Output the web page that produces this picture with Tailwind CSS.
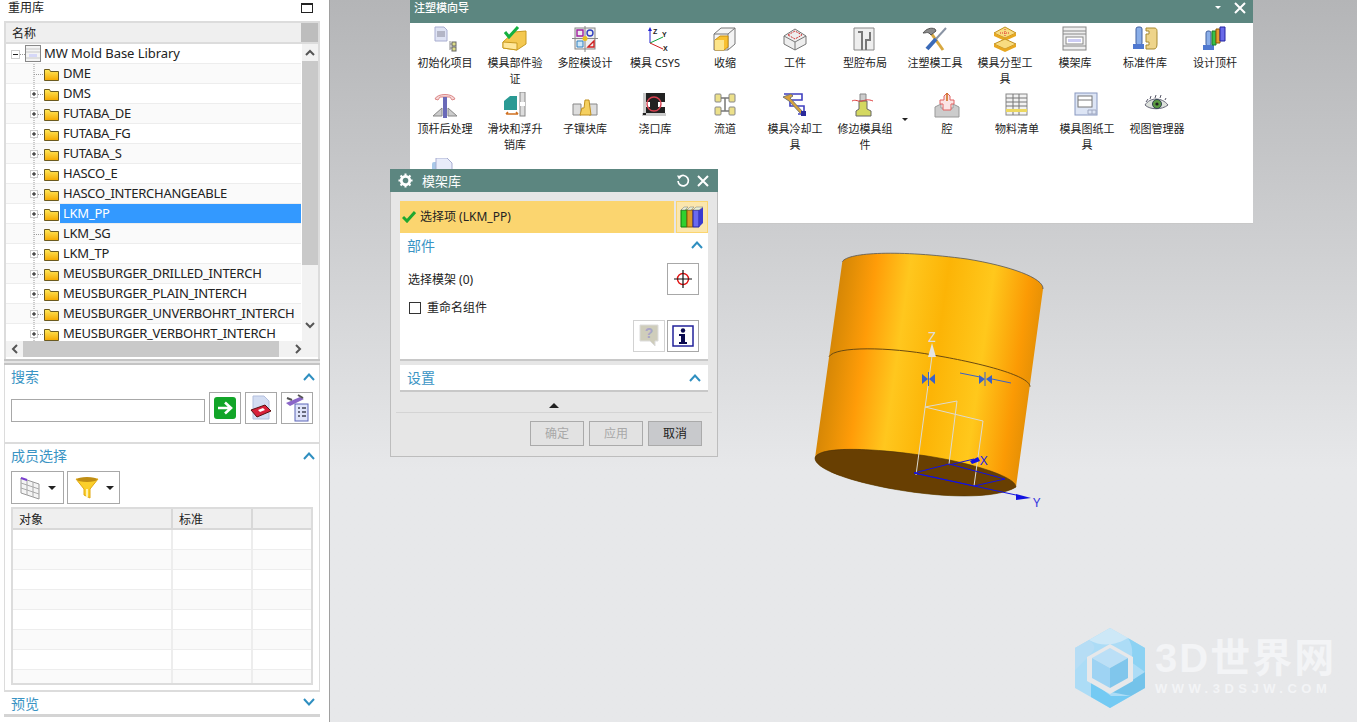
<!DOCTYPE html>
<html lang="zh">
<head>
<meta charset="UTF-8">
<title>注塑模向导</title>
<script src="https://cdn.jsdelivr.net/npm/@tailwindcss/browser@4"></script>
</head>
<body class="m-0">
<div class="relative flex w-[1357px] h-[722px] overflow-hidden text-[12px] text-[#222] font-['Noto_Sans','Noto_Sans_CJK_SC',sans-serif]">

  <!-- left reuse library panel -->
  <div class="w-[330px] h-full shrink-0 bg-white border-r border-r-[#a0a0a0] pr-[9px]">
    <div class="flex items-center justify-between h-[21px] pl-[8px] pr-[7px] pb-[6px]">
      <span class="leading-[15px]">重用库</span>
      <span class="w-[12px] h-[10px] border border-[#222] border-t-2"></span>
    </div>

    <div class="ml-[4px] w-[316px] h-[338px] border-2 border-[#dcdcdc] border-b-0 flex flex-col">
      <div class="flex h-[21px] shrink-0 border-b-2 border-b-[#dcdcdc]">
        <div class="w-[295px] bg-[#efefef] pl-[6px] leading-[21px]">名称</div>
        <div class="flex-1 bg-[#bdbdbd]"></div>
      </div>
      <div class="flex h-[297px] shrink-0">
        <div id="tree" class="w-[295px] h-full overflow-hidden"></div>
        <div class="flex-1 flex flex-col items-center bg-[#f2f2f2] ml-[1px]">
          <svg class="shrink-0 mt-[3px] mb-[3px]" width="10" height="11" viewBox="0 0 10 11"><path d="M1 8l4-4 4 4" fill="none" stroke="#555" stroke-width="2"/></svg>
          <div class="w-full h-[204px] bg-[#c9c9c9] shrink-0"></div>
          <div class="flex-1"></div>
          <svg class="shrink-0 mb-[10px]" width="10" height="11" viewBox="0 0 10 11"><path d="M1 3l4 4 4-4" fill="none" stroke="#555" stroke-width="2"/></svg>
        </div>
      </div>
      <div class="flex items-center h-[16px] shrink-0 bg-[#f2f2f2]">
        <div class="w-[17px] flex justify-center"><svg width="9" height="10" viewBox="0 0 9 10"><path d="M7 1L3 5l4 4" fill="none" stroke="#555" stroke-width="2"/></svg></div>
        <div class="w-[256px] h-full bg-[#c9c9c9]"></div>
        <div class="flex-1 flex justify-center"><svg width="9" height="10" viewBox="0 0 9 10"><path d="M2 1l4 4-4 4" fill="none" stroke="#555" stroke-width="2"/></svg></div>
      </div>
    </div>

    <div class="ml-[4px] w-[316px] h-[6px] bg-[#e4e4e4] border-y-2 border-y-[#c4c4c4]"></div>

    <!-- search -->
    <div class="ml-[4px] w-[316px] h-[79px] border-x border-x-[#dcdcdc] border-b-2 border-b-[#dcdcdc] px-[6px]">
      <div class="flex items-center justify-between h-[27px] pb-[4px]">
        <span class="text-[14px] text-[#3a94c4]">搜索</span>
        <svg class="mr-[-2px]" width="12" height="8" viewBox="0 0 12 8"><path d="M1 7l5-5.500L11 7" fill="none" stroke="#2f8fc0" stroke-width="2"/></svg>
      </div>
      <div class="flex gap-[4px]">
        <div class="w-[194px] h-[23px] mt-[7px] border border-[#a8a8a8]"></div>
        <div class="w-[32px] h-[32px] border border-[#a8a8a8] flex items-center justify-center">
          <svg width="22" height="22" viewBox="0 0 22 22"><rect width="22" height="22" rx="3" fill="#12a528"/><path d="M4 11h12M11 5.500l6 5.500-6 5.500" fill="none" stroke="#fff" stroke-width="2.600"/></svg>
        </div>
        <div class="w-[32px] h-[32px] border border-[#a8a8a8] flex items-center justify-center">
          <svg width="24" height="26" viewBox="0 0 24 26"><path d="M4 1h11l5 5v18H4z" fill="#d3ddf2" stroke="#b3bfdd"/><path d="M2 15l14-5 6 6-14 6z" fill="#d8203a" stroke="#5a1010"/><path d="M9 15l5-2 2 2-5 2z" fill="#fff"/></svg>
        </div>
        <div class="w-[32px] h-[32px] border border-[#a8a8a8] flex items-center justify-center">
          <svg width="26" height="28" viewBox="0 0 26 28"><rect x="11" y="10" width="13" height="17" fill="#dfe4fa" stroke="#5c66b8"/><path d="M14 14h2M18 14h4M14 18h2M18 18h4M14 22h2M18 22h4" stroke="#445" stroke-width="1.500"/><path d="M2 9l14-6 4 2-14 7z" fill="#8a66c8"/><path d="M3 4l5 2M14 1l5 3" stroke="#555" stroke-width="2"/></svg>
        </div>
      </div>
    </div>

    <!-- member select -->
    <div class="ml-[4px] w-[316px] h-[248px] border-x border-x-[#dcdcdc] border-b-2 border-b-[#dcdcdc] px-[6px]">
      <div class="flex items-center justify-between h-[27px] pb-[4px]">
        <span class="text-[14px] text-[#3a94c4]">成员选择</span>
        <svg class="mr-[-2px]" width="12" height="8" viewBox="0 0 12 8"><path d="M1 7l5-5.500L11 7" fill="none" stroke="#2f8fc0" stroke-width="2"/></svg>
      </div>
      <div class="flex gap-[3px]">
        <div class="w-[53px] h-[33px] border border-[#a8a8a8] flex items-center pl-[8px] gap-[8px]">
          <svg width="20" height="24" viewBox="0 0 20 24"><path d="M1 2l18 6v15L1 17z" fill="#f4f4f4" stroke="#999"/><path d="M7 4v15M13 6v15M1 7l18 6M1 12l18 6" stroke="#aaa"/><path d="M1 2l6 2" stroke="#7a3fd0" stroke-width="2"/></svg>
          <span class="w-0 h-0 border-x-[4px] border-x-transparent border-t-[4px] border-t-[#222]"></span>
        </div>
        <div class="w-[53px] h-[33px] border border-[#a8a8a8] flex items-center pl-[7px] gap-[7px]">
          <svg width="24" height="24" viewBox="0 0 24 24"><path d="M1 3h22l-8 10v9l-6-3v-6z" fill="#fbcf2a" stroke="#e2a810"/><ellipse cx="12" cy="3.500" rx="10" ry="2.500" fill="#c08e14"/><path d="M12 13v8" stroke="#fff3b0" stroke-width="2"/></svg>
          <span class="w-0 h-0 border-x-[4px] border-x-transparent border-t-[4px] border-t-[#222]"></span>
        </div>
      </div>
      <div class="mt-[3px] w-[302px] h-[178px] border-2 border-[#dcdcdc] overflow-hidden">
        <div class="flex h-[21px] bg-[#efefef] border-b-2 border-b-[#d8d8d8] leading-[21px]">
          <div class="w-[160px] pl-[6px] border-r-2 border-r-[#d8d8d8]">对象</div>
          <div class="w-[80px] pl-[6px] border-r-2 border-r-[#d8d8d8]">标准</div>
          <div class="flex-1"></div>
        </div>
        <div id="rows"></div>
      </div>
    </div>

    <div class="ml-[4px] w-[316px] h-[25px] border-b-[3px] border-b-[#d4d4d4] flex items-center justify-between px-[7px]">
      <span class="text-[14px] text-[#3a94c4] pt-[1px]">预览</span>
      <svg class="mb-[3px] mr-[-2px]" width="12" height="8" viewBox="0 0 12 8"><path d="M1 1l5 5.500L11 1" fill="none" stroke="#2f8fc0" stroke-width="2"/></svg>
    </div>
  </div>

  <!-- graphics window -->
  <div class="relative flex-1 h-full bg-gradient-to-b from-[#b4b5b7] to-[#e7e8ea] to-65%">
    <!-- cylinder -->
    <svg class="absolute left-0 top-0" width="1027" height="722" viewBox="330 0 1027 722">
      <defs>
        <linearGradient id="body" gradientUnits="userSpaceOnUse" x1="817" y1="355" x2="1042" y2="387">
          <stop offset="0" stop-color="#c97f06"/>
          <stop offset=".1" stop-color="#e28e06"/>
          <stop offset=".2" stop-color="#ff9c08"/>
          <stop offset=".35" stop-color="#ffc71e"/>
          <stop offset=".52" stop-color="#fcb406"/>
          <stop offset=".72" stop-color="#ffc81c"/>
          <stop offset=".88" stop-color="#fb9a04"/>
          <stop offset="1" stop-color="#d88a06"/>
        </linearGradient>
      </defs>
      <path d="M842.300 261.700C848 252 900 250 967 259C1010 266 1044 278 1043 289L1016 487C1000 497 960 498 920 493C870 487 815 472 815 458Z" fill="url(#body)"/>
      <path d="M842.300 261.700C848 252 900 250 967 259C1010 266 1044 278 1043 289" fill="none" stroke="#555" stroke-width=".8"/>
      <path d="M829 356.700C835 346 890 347 933 355C975 362 1030 375 1030 386.700" fill="none" stroke="#6b4a10" stroke-width="1"/>
      <path d="M815 458C818 446 870 448 920 455C965 461 1016 476 1016 487C1000 497 960 498 920 493C870 487 815 472 815 458Z" fill="#683f02" stroke="#4a3008" stroke-width=".6"/>
      <!-- sketch lines -->
      <path d="M916 475L932 356M949 464L957 401L925 407L983 421L974 486M916 475" fill="none" stroke="#dcdad2" stroke-width="1"/>
      <path d="M932 343l-4 14h8z" fill="#e4e4e4"/>
      <path d="M914 473L949 464L1005 479L974 486L914 473L1016 495" fill="none" stroke="#1212e0" stroke-width="1"/>
      <path d="M1016 494l15 4-15 2z" fill="#1212e0"/>
      <path d="M949 465l25-6" stroke="#1212e0" stroke-width="1"/>
      <path d="M970 461l8-4 2 4-8 3z" fill="#1212e0"/>
      <path d="M922 374l6 5-6 5zM935 374l-6 5 6 5zM979 375l6 4-6 5zM992 375l-6 4 6 5z" fill="#3a62c8"/>
      <path d="M928.500 372v14M985 372v14M960 373l20 4M992 379l19 4" stroke="#3a62c8"/>
    </svg>
    <span class="absolute left-[598px] top-[329px] text-[14px] leading-[16px] text-[#ddd]">Z</span>
    <span class="absolute left-[650px] top-[453px] text-[13px] leading-[14px] text-[#2424e0]">X</span>
    <span class="absolute left-[703px] top-[495px] text-[13px] leading-[14px] text-[#3a3ae0]">Y</span>

    <!-- watermark -->
    <svg class="absolute left-[743px] top-[626px]" width="74" height="84" viewBox="0 0 74 84">
      <path d="M37 2L72 22V62L37 82L2 62V22Z" fill="#acdcf6"/>
      <path d="M37 2L55 12C45 18 30 22 16 14Z" fill="#cde8f7"/>
      <path d="M55 12L72 22V46L58 36C60 28 60 20 55 12Z" fill="#8cd2f3"/>
      <path d="M72 46V62L58 70L38 66L58 55Z" fill="#74c3ea"/>
      <path d="M18 55L38 70L58 70L37 82L18 71Z" fill="#74caf3"/>
      <path d="M2 22L16 14C24 20 22 24 16 30L2 44Z" fill="#b6ddf5"/>
      <path d="M37 18L60 31V55L37 68L14 55V31Z" fill="#e7e8ea"/>
      <path d="M37 22L55 32L37 42L19 32Z" fill="#bbdff6"/>
      <path d="M19 32L37 42V62L19 52Z" fill="#9ed3f3"/>
      <path d="M55 32L37 42V62L55 52Z" fill="#80c6ec"/>
    </svg>
    <div class="absolute left-[825px] top-[634px] text-[#f3f4f6]">
      <div class="font-bold text-[40px] leading-[48px] tracking-[2px] whitespace-nowrap font-['Liberation_Sans','Noto_Sans_CJK_SC',sans-serif]">3D世界网</div>
      <div class="text-[13px] leading-[14px] tracking-[4.500px] font-bold font-['Liberation_Sans',sans-serif] whitespace-nowrap">WWW.3DSJW.COM</div>
    </div>

    <!-- mold wizard toolbar -->
    <div class="absolute left-[80px] top-0 w-[843px] h-[224px] bg-white border-b border-b-[#c8c8c8]">
      <div class="flex items-center justify-between h-[23px] bg-[#5c8680] pl-[4px] pr-[7px] text-[11px] text-white font-medium">
        <span class="pb-[7px] leading-[14px]">注塑模向导</span>
        <div class="flex items-center gap-[13px] pb-[8px]">
          <span class="w-0 h-0 border-x-[3px] border-x-transparent border-t-[3px] border-t-white"></span>
          <svg width="12" height="12" viewBox="0 0 12 12"><path d="M1 1l10 10M11 1L1 11" stroke="#fff" stroke-width="2"/></svg>
        </div>
      </div>
      <div id="row1" class="flex h-[66px]"></div>
      <div id="row2" class="flex h-[66px]"></div>
      <div id="row3" class="flex"></div>
    </div>

    <!-- mold base library dialog -->
    <div class="absolute left-[60px] top-[169px] w-[328px] h-[288px] bg-[#e6e6e6] border border-[#bdbdbd] border-t-0 flex flex-col">
      <div class="flex items-center h-[23px] shrink-0 bg-[#5c8680] pl-[8px] pr-[9px] text-white -mx-[1px]">
        <svg width="15" height="15" viewBox="0 0 16 16"><circle cx="8" cy="8" r="4.500" fill="none" stroke="#fff" stroke-width="3"/><path d="M8 .500v3M8 12.500v3M.500 8h3M12.500 8h3M2.700 2.700l2.100 2.100M11.200 11.200l2.100 2.100M13.300 2.700l-2.100 2.100M4.800 11.200l-2.100 2.100" stroke="#fff" stroke-width="2.200"/></svg>
        <span class="ml-[9px] text-[13px] leading-[16px]">模架库</span>
        <div class="flex-1"></div>
        <svg width="14" height="14" viewBox="0 0 14 14"><path d="M3.500 3A5.200 5.200 0 1 1 2 7" fill="none" stroke="#fff" stroke-width="1.700"/><path d="M1 1.500l5 .500-3 3.500z" fill="#fff"/></svg>
        <svg class="ml-[7px]" width="12" height="12" viewBox="0 0 12 12"><path d="M1 1l10 10M11 1L1 11" stroke="#fff" stroke-width="2"/></svg>
      </div>
      <div class="flex h-[32px] mt-[9px] mx-[9px] shrink-0 gap-[2px]">
        <div class="w-[274px] bg-[#fbd56f] flex items-center pl-[2px]">
          <svg width="14" height="12" viewBox="0 0 14 12"><path d="M1 6l4 4 8-9" fill="none" stroke="#1fa82f" stroke-width="3"/></svg>
          <span class="ml-[4px]">选择项 (LKM_PP)</span>
        </div>
        <div class="w-[32px] bg-[#fbe6ad] border border-[#fbd56f] flex items-center justify-center">
          <svg width="24" height="22" viewBox="0 0 24 22"><path d="M1 4h6v17H1z" fill="#2fd02f" stroke="#0a7a0a"/><path d="M7 4h6v17H7z" fill="#d99a28" stroke="#8a5a08"/><path d="M13 4h6v17h-6z" fill="#6a6af0" stroke="#2222a0"/><path d="M19 4l4-3v16l-4 4z" fill="#3a3ad0"/><path d="M1 4l3-3h4L5 4zM7 4l3-3h4l-3 3zM13 4l3-3h7l-4 3z" fill="#e8f0d8" stroke="#777" stroke-width=".5"/></svg>
        </div>
      </div>
      <div class="h-[128px] mx-[9px] shrink-0 bg-white border-b-2 border-b-[#c8c8c8] px-[7px]">
        <div class="flex items-center justify-between h-[26px] pb-[2px]">
          <span class="text-[14px] text-[#3a94c4]">部件</span>
          <svg class="mr-[-2px]" width="12" height="8" viewBox="0 0 12 8"><path d="M1 7l5-5.500L11 7" fill="none" stroke="#2f8fc0" stroke-width="2"/></svg>
        </div>
        <div class="flex items-center justify-between mt-[4px] pl-[1px] pr-[2px]">
          <span class="pt-[1px]">选择模架 (0)</span>
          <div class="w-[32px] h-[32px] border border-[#a8a8a8] flex items-center justify-center">
            <svg width="20" height="20" viewBox="0 0 20 20"><circle cx="10" cy="10" r="5.500" fill="none" stroke="#e01010" stroke-width="1.400"/><path d="M10 1v18M1 10h18" stroke="#111" stroke-width="1.200"/></svg>
          </div>
        </div>
        <div class="flex items-center h-[12px] mt-[7px] pl-[2px]">
          <span class="w-[12px] h-[12px] border border-[#333]"></span>
          <span class="ml-[6px]">重命名组件</span>
        </div>
        <div class="flex justify-end gap-[2px] mt-[6px] pr-[2px]">
          <div class="w-[32px] h-[32px] border border-[#d2d2d2] flex items-center justify-center">
            <svg width="20" height="24" viewBox="0 0 20 24"><path d="M1 1h18v16h-3v5l-5-5H1z" fill="#cfcdbb" stroke="#dcdcdc"/><text x="10" y="14" text-anchor="middle" font-size="14" font-weight="700" fill="#a8a4c8" font-family="Liberation Sans">?</text></svg>
          </div>
          <div class="w-[32px] h-[32px] border border-[#a8a8a8] flex items-center justify-center">
            <svg width="22" height="22" viewBox="0 0 22 22"><rect x="1" y="1" width="20" height="20" fill="#fff" stroke="#22229a" stroke-width="1.500"/><path d="M7 9h6v8h2v2H7v-2h2v-6H7z" fill="#0a0a50"/><circle cx="11" cy="5.500" r="2.200" fill="#0a0a50"/></svg>
          </div>
        </div>
      </div>
      <div class="flex items-center justify-between h-[27px] mt-[4px] mx-[9px] shrink-0 bg-white border-b-2 border-b-[#c8c8c8] pl-[7px] pr-[7px]">
        <span class="text-[14px] text-[#3a94c4]">设置</span>
        <svg width="12" height="8" viewBox="0 0 12 8"><path d="M1 7l5-5.500L11 7" fill="none" stroke="#2f8fc0" stroke-width="2"/></svg>
      </div>
      <div class="flex justify-center h-[20px] pt-[6px] items-center shrink-0">
        <span class="w-0 h-0 border-x-[5px] border-x-transparent border-b-[5px] border-b-[#222]"></span>
      </div>
      <div class="mx-[5px] shrink-0 border-t border-t-[#d4d4d4] pt-[8px] flex justify-end gap-[5px] pr-[10px]">
        <div class="w-[54px] h-[25px] border border-[#aaa] bg-[#e2e2e2] text-[#a8a8a8] flex items-center justify-center">确定</div>
        <div class="w-[54px] h-[25px] border border-[#aaa] bg-[#e2e2e2] text-[#a8a8a8] flex items-center justify-center">应用</div>
        <div class="w-[54px] h-[25px] border border-[#aaa] bg-[#c8c9cc] text-[#222] flex items-center justify-center">取消</div>
      </div>
    </div>
  </div>
</div>

<script>
// tree rows
const treeNames = ['MW Mold Base Library','DME','DMS','FUTABA_DE','FUTABA_FG','FUTABA_S','HASCO_E','HASCO_INTERCHANGEABLE','LKM_PP','LKM_SG','LKM_TP','MEUSBURGER_DRILLED_INTERCH','MEUSBURGER_PLAIN_INTERCH','MEUSBURGER_UNVERBOHRT_INTERCH','MEUSBURGER_VERBOHRT_INTERCH'];
const noPlus = ['DME','LKM_SG'];
const folder = `<defs><linearGradient id="fold" x1="0" y1="0" x2="0" y2="1"><stop offset="0" stop-color="#ffe95a"/><stop offset="1" stop-color="#f5a800"/></linearGradient></defs><path d="M38.500 5.500h5l1 2h8v9h-14z" fill="url(#fold)" stroke="#6a5a20"/>`;
function treeRow(name, i) {
  let art, label;
  if (i === 0) {
    art = `<svg width="54" height="20" viewBox="0 0 54 20"><rect x="5.500" y="6.500" width="8" height="8" fill="#fff" stroke="#ccc"/><path d="M7 10.500h5" stroke="#222"/><path d="M14 10.500h5" stroke="#999" stroke-dasharray="1 1"/><rect x="19.500" y="1.500" width="15" height="16" fill="#f4f4f4" stroke="#888"/><path d="M20 5h14M20 8h14M20 14h14" stroke="#c8c8c8"/><rect x="23" y="10" width="8" height="3" fill="#d6d8f8"/></svg>`;
    label = `<span class="ml-[-16px] leading-[19px] text-[13px] tracking-[-0.05px] whitespace-nowrap">${name}</span>`;
  } else {
    const plus = noPlus.includes(name) ? '' : `<rect x="24.500" y="6.500" width="7" height="7" fill="#fff" stroke="#ccc"/><path d="M26 10h4M28 8v4" stroke="#111"/>`;
    art = `<svg width="54" height="20" viewBox="0 0 54 20">${folder}<path d="M28 0v20" stroke="#999" stroke-dasharray="1 1"/><path d="M28 10.500h10" stroke="#999" stroke-dasharray="1 1"/>${plus}</svg>`;
    const on = name === 'LKM_PP' ? 'bg-[#3399ff] text-white' : '';
    label = `<span class="flex-1 pl-[3px] leading-[19px] text-[13px] tracking-[-0.25px] whitespace-nowrap ${on}">${name}</span>`;
  }
  const stripe = i % 2 ? 'bg-[#fafafa]' : 'bg-white';
  return `<div class="flex h-[20px] border-b border-b-[#ededed] ${stripe}">${art}${label}</div>`;
}
document.getElementById('tree').innerHTML = treeNames.map(treeRow).join('');

// empty member table rows
document.getElementById('rows').innerHTML = [0,1,2,3,4,5,6,7].map(i => `
  <div class="flex h-[20px] border-b border-b-[#ededed] ${i % 2 ? 'bg-[#fafafa]' : 'bg-white'}">
    <div class="w-[160px] border-r-2 border-r-[#ededed]"></div>
    <div class="w-[80px] border-r-2 border-r-[#ededed]"></div>
  </div>`).join('');

// toolbar icons, 26x26 box
const ic = {
  init:'<path d="M3 1h9l3 3v11H3z" fill="#dfe3f4" stroke="#a8add0"/><path d="M5 6h8M5 8h8M5 10h8" stroke="#889"/><path d="M18 15v9M18 18h4M18 22h4" stroke="#888"/><rect x="20" y="16" width="4" height="4" fill="#dede88" stroke="#666"/><rect x="20" y="21" width="4" height="4" fill="#dede88" stroke="#666"/>',
  verify:'<path d="M1 16l11-10 12-1v13l-9 6-14-2z" fill="#f4c850" stroke="#c89a20"/><path d="M1 16l14 1v7L1 22z" fill="#ffe79a" stroke="#c89a20"/><path d="M3 6l4 5 9-10" fill="none" stroke="#14b040" stroke-width="3"/>',
  cavity:'<rect x="3" y="2" width="20" height="21" fill="#eee" stroke="#888"/><path d="M13 0v26M0 12.500h26" stroke="#888"/><path d="M5 4h6v6H5z" fill="none" stroke="#a020a0" stroke-width="1.400"/><circle cx="18" cy="7" r="3" fill="none" stroke="#3040c0" stroke-width="1.400"/><path d="M5 15h6v6H5z" fill="#cfe8f8" stroke="#3080c0"/><path d="M16 21l6-6v6z" fill="none" stroke="#d02020" stroke-width="1.400"/><circle cx="13" cy="12.500" r="2.500" fill="#e8c020"/>',
  csys:'<path d="M8 17V3" stroke="#2020d0"/><path d="M8 17l13-6" stroke="#10a040"/><path d="M8 17l13 6" stroke="#d02020"/><path d="M6 5l2-4 2 4z" fill="#2020d0"/><text x="11" y="8" font-size="7" font-weight="700" font-family="Liberation Sans" fill="#222">Z</text><text x="20" y="11" font-size="7" font-weight="700" font-family="Liberation Sans" fill="#222">Y</text><text x="21" y="25" font-size="7" font-weight="700" font-family="Liberation Sans" fill="#222">X</text>',
  shrink:'<path d="M2 8l7-6h14v16l-7 6H2z" fill="#f4f4f4" stroke="#777"/><path d="M2 8h14v16M16 8l7-6" fill="none" stroke="#777"/><path d="M3 14l5-4h8v11l-4 3H3z" fill="#f8c030" stroke="#c89010"/><path d="M3 14h9v10H3z" fill="#fde58a"/>',
  work:'<path d="M2 10l11-7 11 7v8l-11 6-11-6z" fill="#eee" stroke="#777"/><path d="M2 10l11 6 11-6M13 16v8" fill="none" stroke="#777"/><path d="M6 9l7-4 7 4-7 4z" fill="none" stroke="#d03030" stroke-dasharray="2 1"/>',
  layout:'<path d="M2 2h20v22H2z" fill="#eee" stroke="#888"/><path d="M6 6h4v18M14 24V14h4V6" fill="none" stroke="#777" stroke-width="2"/>',
  tools:'<path d="M21 24L9 7" stroke="#d8a840" stroke-width="3"/><path d="M1 7c3-4 8-6 12-4l1 2-5 4-2-2c-2-1-3 0-6 0z" fill="#8a8a8a" stroke="#555"/><path d="M24 2L14 13" stroke="#8a94a4" stroke-width="2"/><path d="M14 13L5 23" stroke="#3a6ab8" stroke-width="4"/>',
  parting:'<path d="M2 7l11-6 11 6-11 5z" fill="#f8dc80" stroke="#c09020"/><path d="M2 7v3l11 5 11-5V7l-11 5z" fill="#e8a820"/><path d="M2 18l11-5 11 5-11 5z" fill="#f8dc80" stroke="#c09020"/><path d="M2 18v3l11 5 11-5v-3l-11 5z" fill="#e8a820"/><path d="M8 7h10M13 3v7" stroke="#e03030" stroke-dasharray="1 1"/>',
  base:'<rect x="1" y="1" width="23" height="23" fill="#eee" stroke="#888"/><path d="M1 5h23M1 8h23M1 20h23" stroke="#888"/><rect x="4" y="11" width="17" height="7" fill="#fff" stroke="#888"/><rect x="6" y="13" width="13" height="3" fill="#ccccf4"/>',
  std:'<rect x="4" y="1" width="6" height="18" rx="2" fill="#8aaee8" stroke="#4060a0"/><path d="M1 18h11v5H1z" fill="#4f78d0"/><path d="M14 2h8c3 0 3 2 3 4v12c0 3-1 5-3 5h-8v-4h3v-3h-3V8h3V5h-3z" fill="#eed48a" stroke="#a88a30"/>',
  ejector:'<rect x="4" y="5" width="5" height="15" rx="2" fill="#8aaee8" stroke="#4060a0"/><path d="M1 19h11v5H1z" fill="#4f78d0"/><path d="M10 5h4v14h-4z" fill="#38c048" stroke="#1a7a28"/><path d="M14 3h4v14h-4z" fill="#e89a30" stroke="#8a5a08"/><path d="M18 1h5v14h-5z" fill="#6a6ae8" stroke="#2222a0"/>',
  postej:'<path d="M3 7C5 1 21 1 23 7l-3 1-2-3H8L6 8z" fill="#f5d8d8" stroke="#d88"/><path d="M11 5h4v21h-4z" fill="#6a6ab8"/><path d="M1 24l9-8v8zM25 24l-9-8v8z" fill="#ccc" stroke="#888"/>',
  slide:'<path d="M2 18V9l6-5h7v14z" fill="#2a9a94"/><path d="M4 22h12M4 22l2-2M16 22l-2-2" stroke="#d07020" stroke-width="1.600" fill="none"/><rect x="18" y="0" width="5" height="24" fill="#ddd" stroke="#888"/><rect x="18" y="10" width="5" height="4" fill="#fff"/>',
  insert:'<path d="M1 23V12h8v11zM17 23V12h8v11z" fill="#ddd" stroke="#888"/><path d="M8 23l2-7h2l1-8h4l2 15z" fill="#f5d060" stroke="#c09020"/>',
  gate:'<rect x="1" y="1" width="22" height="22" fill="#222"/><rect x="1" y="10" width="22" height="5" fill="#fff"/><path d="M1 1v22h3V1zM0 21h24v3H0z" fill="#ccc"/><circle cx="12" cy="12" r="7" fill="none" stroke="#d84050" stroke-width="1.400"/><path d="M8 9h8v7H8z" fill="#222"/>',
  runner:'<rect x="3" y="2" width="6" height="8" rx="1" fill="#ece08a" stroke="#888"/><rect x="3" y="15" width="6" height="8" rx="1" fill="#ece08a" stroke="#888"/><rect x="17" y="2" width="6" height="8" rx="1" fill="#ece08a" stroke="#888"/><rect x="17" y="15" width="6" height="8" rx="1" fill="#ece08a" stroke="#888"/><path d="M9 6h8M9 19h8M13 6v13" stroke="#777" stroke-width="1.500" fill="none"/>',
  cool:'<path d="M2 2h18v6H8v6h14v8h-6" fill="none" stroke="#4040c0" stroke-width="1.600"/><path d="M1 5l8-3 2 2-3 2 13 14-2 2L7 9z" fill="#d9a23a" stroke="#777"/><rect x="19" y="19" width="5" height="5" fill="#2a2a9a"/>',
  trim:'<path d="M8 2h6v8H8z" fill="#ccc" stroke="#888"/><path d="M7 9v8l-3 2v5h15v-5l-4-2V9z" fill="#d4d860" stroke="#666"/><path d="M0 9c4-2 6 1 10 0s6-2 11 0" fill="none" stroke="#e04040"/>',
  cav:'<path d="M1 15l6-3v4h12v-4l6 3v10H1z" fill="#ccc" stroke="#999"/><path d="M6 8h4V4l3-3 3 3v4h4v4h-3v6H9v-6H6z" fill="#fbe4e4" stroke="#e06060"/><path d="M13 1v8" stroke="#d07020" stroke-width="1.600"/>',
  bom:'<rect x="2" y="2" width="21" height="21" fill="#f2f2f2" stroke="#888"/><path d="M2 6h21M2 10h21M2 14h21M9 2v21M15 2v21" stroke="#777"/><rect x="2" y="17" width="21" height="3" fill="#ecd860"/>',
  draw:'<rect x="1" y="1" width="22" height="22" fill="#dde5f5" stroke="#8898c0"/><rect x="4" y="4" width="14" height="11" fill="#fff" stroke="#777"/><path d="M4 8h14" stroke="#777"/><path d="M14 18h8v4h-8zM18 18v4" fill="none" stroke="#a0a8c0"/>',
  eye:'<path d="M1 13C6 5 18 5 24 13 18 18 6 18 1 13z" fill="#dde2dc" stroke="#667"/><circle cx="13" cy="12" r="4.500" fill="#5a9a40" stroke="#345"/><circle cx="13" cy="12" r="1.600" fill="#222"/><path d="M2 10l2-3M6 7l1-3M11 6l1-3M16 6l1-3M21 8l1-2" stroke="#556"/>',
  sheet:'<rect x="0" y="4" width="6" height="16" rx="2" fill="#a8c8e8"/><path d="M4 0h11l5 5v20H4z" fill="#e8ecfa" stroke="#a8add0"/><path d="M8 12h8M8 15h8" stroke="#e03030"/>'
};
const tool = (label, icon) => `
  <div class="w-[70px] shrink-0 flex flex-col items-center">
    <svg class="mt-[3px] shrink-0" width="26" height="26" viewBox="0 0 26 26">${ic[icon]}</svg>
    <span class="mt-[3px] w-[62px] text-center text-[11px] leading-[16px] break-all">${label}</span>
  </div>`;
const row1 = [['初始化项目','init'],['模具部件验证','verify'],['多腔模设计','cavity'],['模具 CSYS','csys'],['收缩','shrink'],['工件','work'],['型腔布局','layout'],['注塑模工具','tools'],['模具分型工具','parting'],['模架库','base'],['标准件库','std'],['设计顶杆','ejector']];
const row2 = [['顶杆后处理','postej'],['滑块和浮升销库','slide'],['子镶块库','insert'],['浇口库','gate'],['流道','runner'],['模具冷却工具','cool'],['修边模具组件','trim']];
const row2b = [['腔','cav'],['物料清单','bom'],['模具图纸工具','draw'],['视图管理器','eye']];
document.getElementById('row1').innerHTML = row1.map(t => tool(...t)).join('');
document.getElementById('row2').innerHTML = row2.map(t => tool(...t)).join('')
  + '<div class="w-[12px] shrink-0 pt-[29px] pl-[2px]"><div class="w-0 h-0 border-x-[3px] border-x-transparent border-t-[3px] border-t-[#222]"></div></div>'
  + row2b.map(t => tool(...t)).join('');
document.getElementById('row3').innerHTML = tool('', 'sheet');
</script>
</body>
</html>
